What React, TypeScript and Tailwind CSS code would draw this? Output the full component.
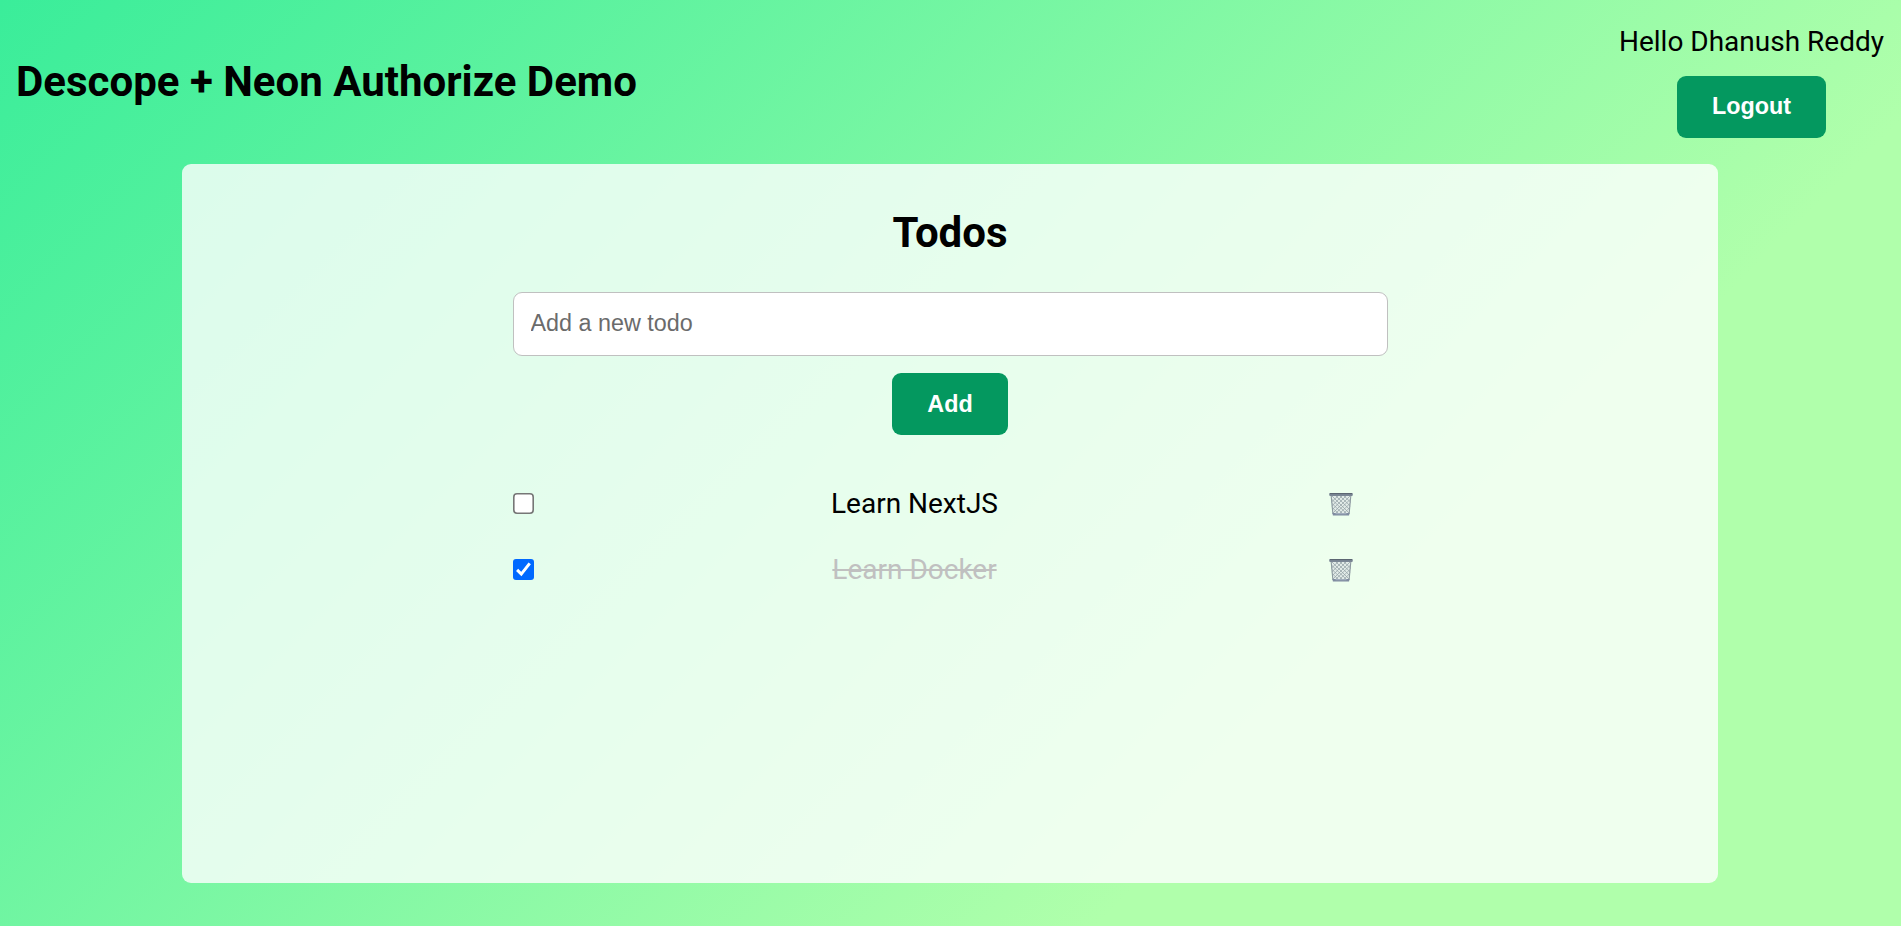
import { useState } from "react";

type Todo = { id: number; task: string; done: boolean };

const initialTodos: Todo[] = [
  { id: 1, task: "Learn NextJS", done: false },
  { id: 2, task: "Learn Docker", done: true },
];

function WastebasketIcon() {
  return (
    <svg width="24" height="24" viewBox="0 0 24 24" aria-hidden="true">
      <path d="M1.8 3 H22.2 L20.4 23 H3.6 Z" fill="#e2ebe8" />
      <g stroke="#93a1a5" strokeWidth="0.75" fill="none">
        <path d="M2.4 7 L18 22 M2 3 L20 21 M6 3 L20.6 17.5 M10 3 L21.2 14 M14 3 L22 10.5 M3 11.5 L14 22 M3.6 16 L10 22" />
        <path d="M21.6 7 L6 22 M22 3 L4 21 M18 3 L3.4 17.5 M14 3 L2.8 14 M10 3 L2 10.5 M21 11.5 L10 22 M20.4 16 L14 22" />
      </g>
      <path d="M2.2 4 L3.9 22 M21.8 4 L20.1 22" stroke="#8c999f" strokeWidth="1.1" />
      <path d="M3.6 21 H20.4 L20.1 23.6 H3.9 Z" fill="#7f8ca0" />
      <path d="M6.5 21.7 H17.5" stroke="#b4bfcb" strokeWidth="0.8" />
      <rect x="0.2" y="0.9" width="23.6" height="3" rx="0.8" fill="#7b8795" />
      <path d="M1 1.6 H23" stroke="#59636f" strokeWidth="1" />
    </svg>
  );
}

function TodoCheckbox({ checked, onToggle }: { checked: boolean; onToggle: () => void }) {
  return (
    <button
      role="checkbox"
      aria-checked={checked}
      onClick={onToggle}
      className={
        checked
          ? "flex size-[21px] items-center justify-center rounded-[3px] bg-[#0069ff]"
          : "size-[21px]"
      }
    >
      {checked ? (
        <svg width="21" height="21" viewBox="0 0 21 21" fill="none" stroke="#fff" strokeWidth="3">
          <path d="M4.1 10.9 L8.3 15.1 L16.7 4.3" />
        </svg>
      ) : (
        <svg width="21" height="21" viewBox="0 0 21 21">
          <rect x="0.8" y="0.8" width="19.4" height="19.4" rx="3.2" fill="#fff" stroke="#767676" strokeWidth="1.6" />
        </svg>
      )}
    </button>
  );
}

export default function App() {
  const [todos, setTodos] = useState(initialTodos);
  const [draft, setDraft] = useState("");

  const add = () => {
    if (!draft.trim()) return;
    setTodos([...todos, { id: Date.now(), task: draft, done: false }]);
    setDraft("");
  };

  return (
    <div className="flex h-screen flex-col bg-[linear-gradient(135deg,#3aed9a_0%,#b0ffab_71.5%)] font-[Roboto,sans-serif] text-[28px] leading-[33px] text-black">
      <header className="flex h-[164px] shrink-0 items-center justify-between pr-[17px] pb-0.5 pl-4">
        <h1 className="text-[42px] leading-[49px] font-bold">Descope + Neon Authorize Demo</h1>
        <div className="flex flex-col items-center gap-[18px]">
          <p>Hello Dhanush Reddy</p>
          <button className="h-[62px] w-[149px] rounded-[9px] bg-[#04985f] pb-0.5 font-['Liberation_Sans',sans-serif] text-[23.33px] leading-7 font-bold text-white">
            Logout
          </button>
        </div>
      </header>
      <main className="ml-[182px] flex h-[719px] w-[1536px] flex-col items-center rounded-[9px] bg-white/80 pt-11">
        <h2 className="text-[42px] leading-[49px] font-bold">Todos</h2>
        <form
          className="mt-[35px] flex w-[875px] flex-col items-center gap-[17px]"
          onSubmit={(e) => {
            e.preventDefault();
            add();
          }}
        >
          <input
            value={draft}
            onChange={(e) => setDraft(e.target.value)}
            placeholder="Add a new todo"
            className="h-16 w-full rounded-[9px] border border-[#c0c0c0] bg-white px-[17px] pb-px font-['Liberation_Sans',sans-serif] text-[23.33px] placeholder:text-[#6b6b6b]"
          />
          <button className="h-[62px] w-[116px] rounded-[9px] bg-[#04985f] font-['Liberation_Sans',sans-serif] text-[23.33px] leading-7 font-bold text-white">
            Add
          </button>
        </form>
        <ul className="mt-[52px] flex w-[875px] flex-col gap-[33px]">
          {todos.map((todo) => (
            <li key={todo.id} className="flex h-[33px] items-center justify-between">
              <TodoCheckbox
                checked={todo.done}
                onToggle={() =>
                  setTodos(todos.map((t) => (t.id === todo.id ? { ...t, done: !t.done } : t)))
                }
              />
              <span className={todo.done ? "text-[#c0c0c0] line-through decoration-2" : ""}>
                {todo.task}
              </span>
              <button
                aria-label="Delete"
                className="pr-[34.5px] pl-[33.5px]"
                onClick={() => setTodos(todos.filter((t) => t.id !== todo.id))}
              >
                <WastebasketIcon />
              </button>
            </li>
          ))}
        </ul>
      </main>
    </div>
  );
}
